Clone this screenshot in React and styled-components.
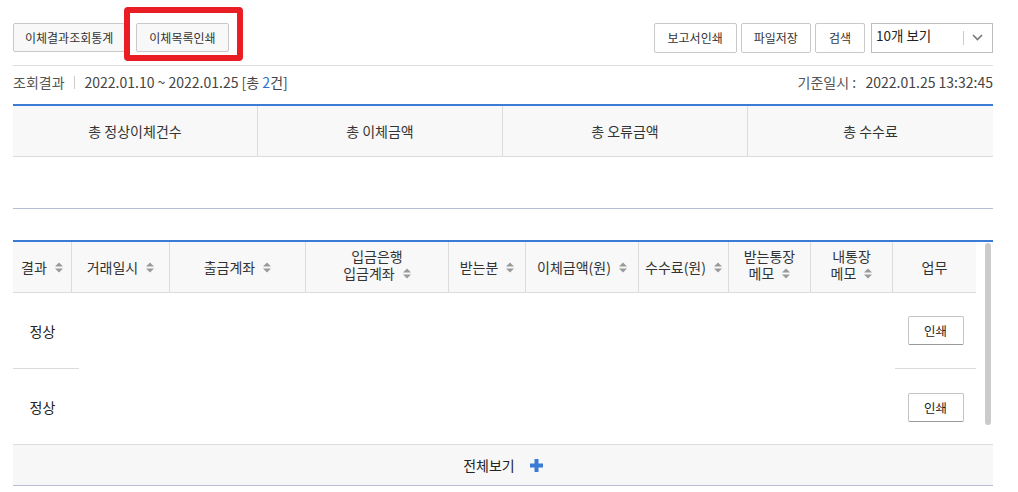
import React from 'react';
import styled, { createGlobalStyle } from 'styled-components';

const GlobalStyle = createGlobalStyle`
    body{
        margin: 0;
        background: #fff;
        font-family: "Noto Sans CJK KR", "Noto Sans", sans-serif;
        color: #333;
    }
    *{ box-sizing: border-box; }
`;

const Page = styled.div`
    width: 980px;
    margin-left: 13px;
`;

const Toolbar = styled.div`
    display: flex;
    justify-content: space-between;
    align-items: center;
    height: 66px;
    padding-top: 10px;
    border-bottom: 1px solid #dedede;
`;

const BtnGroup = styled.div`
    display: flex;
    align-items: center;
    gap: ${props => props.gap || 4}px;
`;

const Btn = styled.button`
    height: ${props => props.h || 29}px;
    padding: 0 ${props => props.pad || 12}px;
    border: 1px solid #c9c9c9;
    border-radius: 2px;
    background: ${props => props.white ? '#fff' : '#f8f8f8'};
    font-family: inherit;
    font-size: 12px;
    color: #333;
    line-height: 1;
    cursor: pointer;
`;

const Highlight = styled.span`
    position: relative;
    display: inline-flex;

    &::after{
        content: '';
        position: absolute;
        left: -12px;
        right: -14px;
        top: -16px;
        bottom: -9px;
        border: 6px solid #ea1c24;
        border-radius: 4px;
        pointer-events: none;
    }
`;

const Select = styled.div`
    display: flex;
    align-items: center;
    width: 122px;
    height: 30px;
    margin-left: 2px;
    border: 1px solid #bdbdbd;
    font-size: 13.5px;
    color: #222;

    span{
        flex: 1;
        padding-left: 4px;
        margin-top: -5px;
    }
    i{
        width: 1px;
        height: 14px;
        background: #ccc;
    }
    svg{
        margin: 0 9px 0 8px;
    }
`;

const InfoRow = styled.div`
    display: flex;
    justify-content: space-between;
    align-items: center;
    height: 32px;
    font-size: 14px;
    color: #444;

    .label{ color: #555; }
    .bar{
        display: inline-block;
        width: 1px;
        height: 13px;
        background: #ccc;
        margin: 0 10px 0 9px;
        vertical-align: -1px;
    }
    .count{ color: #2f6fd0; }
`;

const Summary = styled.div`
    margin-top: 6px;
    border-top: 2px solid #3b7bd4;
    border-bottom: 1px solid #b9bed6;
`;

const SummaryHead = styled.div`
    display: grid;
    grid-template-columns: repeat(4, 1fr);
    background: #f8f8f8;
    border-bottom: 1px solid #dcdcdc;
`;

const SummaryCell = styled.div`
    height: 50px;
    display: flex;
    align-items: center;
    justify-content: center;
    font-size: 14px;
    color: #333;
    border-right: ${props => props.last ? 'none' : '1px solid #dcdcdc'};
`;

const SummaryBody = styled.div`
    height: 51px;
`;

const Grid = styled.div`
    margin-top: 31px;
    border-top: 2px solid #3b7bd4;
    display: flex;
`;

const GridInner = styled.div`
    width: 963px;
    height: 202px;
    overflow: hidden;
`;

const cols = '59px 98px 136px 143px 77px 113px 90px 82px 82px 83px';

const HeadRow = styled.div`
    display: grid;
    grid-template-columns: ${cols};
    background: #f8f8f8;
    border-bottom: 1px solid #dcdcdc;
`;

const HeadCell = styled.div`
    height: 50px;
    display: flex;
    flex-direction: ${props => props.multi ? 'column' : 'row'};
    align-items: center;
    justify-content: center;
    padding-bottom: ${props => props.multi ? 5 : 0}px;
    text-align: center;
    font-size: 14px;
    color: #333;
    border-right: ${props => props.last ? 'none' : '1px solid #dcdcdc'};

    svg{
        margin-left: 8px;
        flex: none;
    }
`;

const HeadLine = styled.div`
    display: flex;
    align-items: center;
    height: 17px;
    line-height: 17px;
`;

const BodyRow = styled.div`
    display: grid;
    grid-template-columns: 66px 1fr 81px;
    height: 76px;
`;

const BodyCell = styled.div`
    display: flex;
    align-items: center;
    justify-content: center;
    padding-right: ${props => props.padR || 0}px;
    font-size: 14px;
    color: #222;
    border-bottom: ${props => props.line ? '1px solid #dcdcdc' : 'none'};
`;

const PrintBtn = styled.button`
    width: 56px;
    height: 29px;
    background: #fff;
    border: 1px solid #c4c4c4;
    border-bottom-color: #999;
    border-radius: 2px;
    font-family: inherit;
    font-size: 12.5px;
    color: #222;
    cursor: pointer;
`;

const Track = styled.div`
    width: 17px;
    padding: 1px 2px 0 9px;
`;

const Thumb = styled.div`
    width: 6px;
    height: 182px;
    border-radius: 3px;
    background: #cbcbcb;
`;

const Footer = styled.div`
    height: 42px;
    display: flex;
    align-items: center;
    justify-content: center;
    gap: 15px;
    background: #f7f7f7;
    border-top: 1px solid #dcdcdc;
    border-bottom: 1px solid #b9bed6;
    font-size: 14px;
    color: #222;

    svg{ margin-top: 1px; }
`;

const SortIcon = () => (
    <svg width="8" height="11" viewBox="0 0 8 11">
        <path d="M0 4.5 L4 0.5 L8 4.5 Z M0 6.5 L4 10.5 L8 6.5 Z" fill="#9a9a9a" />
    </svg>
);

const headers = [
    ['결과'], ['거래일시'], ['출금계좌'], ['입금은행', '입금계좌'], ['받는분'],
    ['이체금액(원)'], ['수수료(원)'], ['받는통장', '메모'], ['내통장', '메모'], ['업무'],
];

const App = () => {
    return (
        <>
            <GlobalStyle />
            <Page>
                <Toolbar>
                    <BtnGroup gap={11}>
                        <Btn pad={11}>이체결과조회통계</Btn>
                        <Highlight><Btn pad={12}>이체목록인쇄</Btn></Highlight>
                    </BtnGroup>
                    <BtnGroup>
                        <Btn white h={30} pad={13}>보고서인쇄</Btn>
                        <Btn white h={30}>파일저장</Btn>
                        <Btn white h={30} pad={13}>검색</Btn>
                        <Select>
                            <span>10개 보기</span>
                            <i />
                            <svg width="11" height="7" viewBox="0 0 11 7">
                                <path d="M1 1 L5.5 5.5 L10 1" fill="none" stroke="#777" strokeWidth="1.6" />
                            </svg>
                        </Select>
                    </BtnGroup>
                </Toolbar>

                <InfoRow>
                    <div>
                        <span className="label">조회결과</span>
                        <span className="bar" />
                        2022.01.10 ~ 2022.01.25 [총 <span className="count">2</span>건]
                    </div>
                    <div>
                        <span className="label">기준일시 :</span>&nbsp;&nbsp; 2022.01.25 13:32:45
                    </div>
                </InfoRow>

                <Summary>
                    <SummaryHead>
                        <SummaryCell>총 정상이체건수</SummaryCell>
                        <SummaryCell>총 이체금액</SummaryCell>
                        <SummaryCell>총 오류금액</SummaryCell>
                        <SummaryCell last>총 수수료</SummaryCell>
                    </SummaryHead>
                    <SummaryBody />
                </Summary>

                <Grid>
                    <GridInner>
                        <HeadRow>
                            {headers.map((h, idx) => (
                                <HeadCell key={idx} multi={h.length > 1} last={idx === headers.length - 1}>
                                    {h.length === 1 ? (
                                        <>
                                            <span>{h[0]}</span>
                                            {idx < headers.length - 1 && <SortIcon />}
                                        </>
                                    ) : (
                                        <>
                                            <HeadLine>{h[0]}</HeadLine>
                                            <HeadLine>{h[1]}<SortIcon /></HeadLine>
                                        </>
                                    )}
                                </HeadCell>
                            ))}
                        </HeadRow>
                        {[0, 1].map(i => (
                            <BodyRow key={i}>
                                <BodyCell line={i === 0} padR={7}>정상</BodyCell>
                                <BodyCell />
                                <BodyCell line={i === 0}><PrintBtn>인쇄</PrintBtn></BodyCell>
                            </BodyRow>
                        ))}
                    </GridInner>
                    <Track><Thumb /></Track>
                </Grid>

                <Footer>
                    <span>전체보기</span>
                    <svg width="13" height="13" viewBox="0 0 13 13">
                        <path d="M4.5 0 H8.5 V4.5 H13 V8.5 H8.5 V13 H4.5 V8.5 H0 V4.5 H4.5 Z" fill="#3a7bd5" />
                    </svg>
                </Footer>
            </Page>
        </>
    );
};

export default App;
